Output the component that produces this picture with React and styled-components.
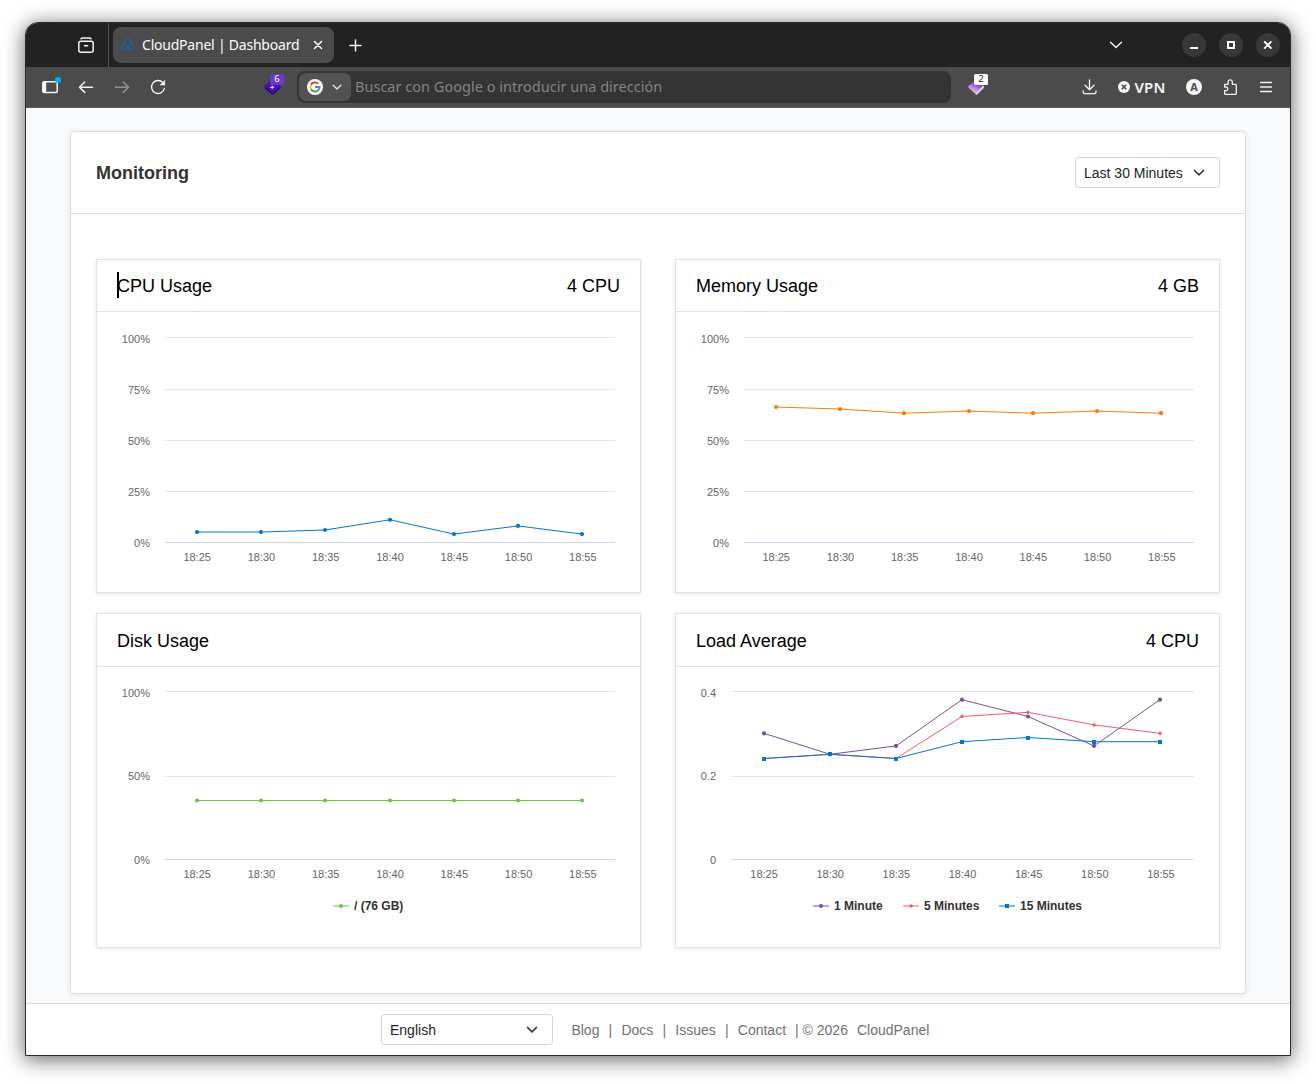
import styled, { createGlobalStyle } from 'styled-components';

const GlobalStyle = createGlobalStyle`
    * {
        box-sizing: border-box;
    }

    body {
        margin: 0;
        background: white;
        font-family: "Liberation Sans", Arial, sans-serif;
    }
`

const Desktop = styled.div`
    height: 1084px;
    padding: 22px 25px 28px;
    overflow: hidden;
`

const Window = styled.div`
    display: flex;
    flex-direction: column;
    width: 1266px;
    height: 1034px;
    border: 1px solid #2b2b2b;
    border-radius: 13px 13px 0 0;
    overflow: hidden;
    background: #f9fafc;
    box-shadow: 0 3px 20px 1px rgba(0, 0, 0, 0.58);
`

const TabStrip = styled.div`
    display: flex;
    align-items: center;
    height: 44px;
    flex-shrink: 0;
    padding: 0 10px 0 42px;
    background: #222222;
    color: #fbfbfe;
    font-family: "Noto Sans", "Open Sans", sans-serif;
`

const Slot = styled.div`
    display: flex;
    align-items: center;
    justify-content: center;
    flex-shrink: 0;
    position: relative;
    width: ${props => props.$width || 36}px;
    height: 36px;
    margin-left: ${props => props.$left || '0'};
    color: ${props => props.$dim ? '#929292' : '#f4f4f6'};

    svg {
        display: block;
    }
`

const Divider = styled.div`
    width: 1px;
    height: 44px;
    margin: 0 4px;
    background: #555555;
`

const Tab = styled.div`
    display: flex;
    align-items: center;
    width: 221px;
    height: 36px;
    padding: 0 8px;
    border-radius: 8px;
    background: #4b4b4b;
    font-size: 14px;

    span {
        width: 162px;
        margin: 0 7px 1px 7px;
        white-space: nowrap;
        letter-spacing: -0.22px;
    }
`

const WindowButton = styled.div`
    display: flex;
    align-items: center;
    justify-content: center;
    width: 24px;
    height: 24px;
    margin-left: ${props => props.$left || 13}px;
    border-radius: 50%;
    background: #383838;
`

const Toolbar = styled.div`
    display: flex;
    align-items: center;
    height: 41px;
    flex-shrink: 0;
    padding: 0 6px;
    border-bottom: 1px solid #5a5a5a;
    background: #4b4b4b;
    font-family: "Noto Sans", "Open Sans", sans-serif;
`

const UrlBar = styled.div`
    display: flex;
    align-items: center;
    width: 654px;
    height: 32px;
    margin-left: 6px;
    padding: 2px;
    border-radius: 8px;
    background: #343434;
    color: #838383;
    font-size: 14.5px;
    white-space: nowrap;
    letter-spacing: 0.02px;

    > span {
        padding-bottom: 2px;
    }
`

const Engine = styled.div`
    display: flex;
    align-items: center;
    gap: 9px;
    width: 52px;
    height: 28px;
    margin-right: 4px;
    padding-left: 8px;
    border-radius: 7px;
    background: #525252;
    color: #e8e8e8;
`

const Badge = styled.div`
    position: absolute;
    top: 5px;
    right: ${props => props.$right}px;
    width: 14px;
    height: 11px;
    border-radius: 1.5px;
    background: ${props => props.$bg};
    color: ${props => props.$color};
    font-size: 9.5px;
    line-height: 10px;
    text-align: center;
`

const VpnLabel = styled.span`
    margin-left: 4px;
    padding-bottom: 1px;
    font-size: 15px;
    font-weight: 600;
    letter-spacing: 0.2px;
`

const Content = styled.main`
    flex: 1;
    padding: 23px 44px 0;
`

const Panel = styled.section`
    width: 1176px;
    height: 863px;
    border: 1px solid #dedede;
    border-radius: 4px;
    background: white;
    box-shadow: 0 1px 6px rgba(0, 0, 0, 0.08);
`

const PanelHeader = styled.header`
    display: flex;
    align-items: center;
    justify-content: space-between;
    height: 82px;
    padding: 0 25px;
    border-bottom: 1px solid #dedede;

    h2 {
        margin: 2px 0 0;
        color: #333333;
        font-size: 18px;
    }
`

const SelectBox = styled.div`
    display: flex;
    align-items: center;
    justify-content: space-between;
    width: ${props => props.$width}px;
    height: 31px;
    padding: 0 ${props => props.$end}px 0 8px;
    border: 1px solid #ced4da;
    border-radius: 3.5px;
    background: white;
    color: #212529;
    font-size: 14px;
`

const CardGrid = styled.div`
    display: grid;
    grid-template-columns: 545px 545px;
    grid-template-rows: 334px 335px;
    gap: 20px 34px;
    padding: 45px 25px 0;
`

const Card = styled.article`
    border: 1px solid #e2e2e2;
    background: white;
    box-shadow: 0 1px 4px rgba(0, 0, 0, 0.1);

    svg {
        display: block;
    }
`

const CardHeader = styled.div`
    display: flex;
    align-items: center;
    justify-content: space-between;
    position: relative;
    height: ${props => props.$height}px;
    padding: ${props => props.$height - 51}px 20px 0;
    border-bottom: 1px solid #e2e2e2;
    color: black;
    font-size: 18px;
`

const Caret = styled.div`
    position: absolute;
    left: 20px;
    top: 12px;
    width: 2px;
    height: 26px;
    background: black;
`

const Footer = styled.footer`
    display: flex;
    align-items: center;
    height: 52px;
    flex-shrink: 0;
    padding-left: 355px;
    border-top: 1px solid #dcdfe2;
    background: white;
    color: #6f7275;
    font-size: 14px;
`

const FooterLinks = styled.div`
    display: flex;
    margin-left: 18.4px;
    white-space: pre;

    i {
        width: 22px;
        font-style: normal;
        text-align: center;
    }
`

const Copyright = styled.span`
    margin: 0 9px 0 9px;
`

const times = ['18:25', '18:30', '18:35', '18:40', '18:45', '18:50', '18:55']
// label, grid line y, label baseline
const percentTicks = [['100%', 25, 31], ['75%', 77, 82], ['50%', 128, 133], ['25%', 179, 184], ['0%', 230, 235]]

const charts = [
    {
        title: 'CPU Usage', info: '4 CPU', header: 52, caret: true, left: 68, max: 100, ticks: percentTicks,
        series: [{ color: '#0078d4', shape: 'circle', data: [5, 5, 6, 11, 4, 8, 4] }],
    },
    {
        title: 'Memory Usage', info: '4 GB', header: 52, left: 68, max: 100, ticks: percentTicks,
        series: [{ color: '#fb7a09', shape: 'circle', data: [66, 65, 63, 64, 63, 64, 63] }],
    },
    {
        title: 'Disk Usage', header: 53, left: 68, max: 100,
        ticks: [['100%', 24, 30], ['50%', 109, 113], ['0%', 192, 197]],
        series: [{ name: '/ (76 GB)', legendX: 236, color: '#74c04a', shape: 'circle', data: [35, 35, 35, 35, 35, 35, 35] }],
    },
    {
        title: 'Load Average', info: '4 CPU', header: 53, left: 55, max: 0.4,
        ticks: [['0.4', 24, 30], ['0.2', 109, 113], ['0', 192, 197]],
        series: [
            { name: '1 Minute', legendX: 137, color: '#774fa8', shape: 'circle', data: [0.3, 0.25, 0.27, 0.38, 0.34, 0.27, 0.38] },
            { name: '5 Minutes', legendX: 227, color: '#f05b72', shape: 'diamond', data: [0.24, 0.25, 0.24, 0.34, 0.35, 0.32, 0.3] },
            { name: '15 Minutes', legendX: 323, color: '#0078d4', shape: 'square', data: [0.24, 0.25, 0.24, 0.28, 0.29, 0.28, 0.28] },
        ],
    },
]

function Marker({ shape, x, y, color }) {
    if (shape === 'square') return <rect x={x - 2} y={Math.round(y) - 2} width="4" height="4" fill={color} />
    if (shape === 'diamond') return <path d={`M${x} ${y - 2.1}l2.1 2.1l-2.1 2.1l-2.1 -2.1z`} fill={color} />
    return <circle cx={x} cy={y} r="2.1" fill={color} />
}

function LineChart({ left, max, ticks, series }) {
    const right = 518
    const step = (right - left) / times.length
    const top = ticks[0][1] + 0.5
    const bottom = ticks[ticks.length - 1][1] + 0.5
    const px = (i) => left + step * (i + 0.5)
    const pointX = (i) => Math.floor(px(i))
    const py = (v) => bottom - 0.2 - (v / max) * (bottom - top)

    return (
        <svg width="543" height="276" fontSize="11" fill="#666666">
            {ticks.map(([label, y, baseline], i) => (
                <g key={label}>
                    <path d={`M${left} ${y + 0.5}H${right}`} stroke={i === ticks.length - 1 ? '#ccd6eb' : '#e6e6e6'} />
                    <text x={left - 15} y={baseline} textAnchor="end">{label}</text>
                </g>
            ))}
            {times.map((time, i) => (
                <text key={time} x={px(i)} y={bottom + 18.5} textAnchor="middle">{time}</text>
            ))}
            {series.map((s) => (
                <g key={s.color}>
                    <polyline points={s.data.map((v, i) => `${pointX(i)},${py(v)}`).join(' ')} fill="none" stroke={s.color} />
                    {s.data.map((v, i) => <Marker key={i} shape={s.shape} x={pointX(i)} y={py(v)} color={s.color} />)}
                </g>
            ))}
            {series.filter((s) => s.name).map((s) => (
                <g key={s.name}>
                    <path d={`M${s.legendX} 239h16`} stroke={s.color} />
                    <Marker shape={s.shape} x={s.legendX + 8} y={239} color={s.color} />
                    <text x={s.legendX + 21} y="243" fontSize="12" fontWeight="bold" fill="#333333">{s.name}</text>
                </g>
            ))}
        </svg>
    )
}

function Icon({ size = 24, weight = 1.5, children }) {
    return (
        <svg width={size} height={size} viewBox={`0 0 ${size} ${size}`} fill="none" stroke="currentColor"
            strokeWidth={weight} strokeLinecap="round" strokeLinejoin="round">
            {children}
        </svg>
    )
}

function Chevron({ color }) {
    return (
        <svg width="12" height="12" viewBox="0 0 16 16" fill="none" stroke={color} strokeWidth="2" strokeLinecap="round" strokeLinejoin="round">
            <path d="M2 4.5l6 6 6-6" />
        </svg>
    )
}

function CloudLogo() {
    return (
        <svg width="14" height="14" viewBox="0 0 14 14" fill="none" stroke="#1764b4" strokeWidth="1.3" strokeLinecap="round">
            <path d="M3.9 5.6A3.2 3.2 0 1 1 9.6 5.6L7.6 8.2" />
            <path d="M3.9 5.6A3.1 3.1 0 1 0 6.4 10.6L4.9 8" />
            <path d="M9.9 5.5A3.1 3.1 0 1 1 7.6 10.8L6.4 8.6" />
        </svg>
    )
}

function GoogleLogo() {
    return (
        <svg width="16" height="16" viewBox="0 0 16 16" fill="none" strokeWidth="2">
            <circle cx="8" cy="8" r="8" fill="white" />
            <path d="M11.2 4.8A4.6 4.6 0 0 0 4 5.7" stroke="#ea4335" />
            <path d="M4 5.7a4.6 4.6 0 0 0 0 4.6" stroke="#fbbc05" />
            <path d="M4 10.3a4.6 4.6 0 0 0 7 1.1" stroke="#34a853" />
            <path d="M11 11.4A4.6 4.6 0 0 0 12.6 8H8" stroke="#4285f4" />
        </svg>
    )
}

function BrowserTabs() {
    return (
        <TabStrip>
            <Slot>
                <Icon>
                    <path d="M7 5.8q.5-.9 1.6-.9h6.8q1.1 0 1.6.9" />
                    <rect x="4.8" y="8.3" width="14.4" height="11" rx="2" />
                    <path d="M10.5 12.8h3" />
                </Icon>
            </Slot>
            <Divider />
            <Tab>
                <CloudLogo />
                <span>CloudPanel | Dashboard</span>
                <Icon size={14} weight={1.6}><path d="M3.5 3.5l7 7M10.5 3.5l-7 7" /></Icon>
            </Tab>
            <Slot $left="4px">
                <Icon><path d="M11.5 7v11M6 12.5h11" /></Icon>
            </Slot>
            <Slot $left="auto">
                <Icon weight={1.4}><path d="M6.5 9.2l5.5 5.3 5.5-5.3" /></Icon>
            </Slot>
            <WindowButton $left={48}>
                <svg width="24" height="24" fill="white"><path d="M8 14h8v2H8z" /></svg>
            </WindowButton>
            <WindowButton>
                <svg width="24" height="24" fill="none" stroke="white" strokeWidth="2"><path d="M9 9h6v6H9z" /></svg>
            </WindowButton>
            <WindowButton>
                <svg width="24" height="24" fill="none" stroke="white" strokeWidth="2"><path d="M8.2 8.4l7.2 7.2M15.4 8.4l-7.2 7.2" /></svg>
            </WindowButton>
        </TabStrip>
    )
}

function BrowserToolbar() {
    return (
        <Toolbar>
            <Slot>
                <Icon>
                    <rect x="4.8" y="6.8" width="14.4" height="10.6" rx="1.2" />
                    <path d="M4.6 7h3.6v10H4.6z" fill="currentColor" stroke="none" />
                    <circle cx="20" cy="5" r="3" fill="#00aef5" stroke="none" />
                </Icon>
            </Slot>
            <Slot>
                <Icon><path d="M18.5 12.2h-13M10.7 7l-5.2 5.2 5.2 5.2" /></Icon>
            </Slot>
            <Slot $dim>
                <Icon><path d="M5.5 12.2h13M13.3 7l5.2 5.2-5.2 5.2" /></Icon>
            </Slot>
            <Slot>
                <Icon weight={1.4}>
                    <path d="M18.4 13.4A6.5 6.5 0 1 1 16.9 7.6" />
                    <path d="M18.8 5.6v4.4h-4.4z" fill="currentColor" strokeWidth="0.6" />
                </Icon>
            </Slot>
            <Slot $left="79px">
                <svg width="24" height="24">
                    <path d="M11.5 4l8 7.5v1.8l-8 6.7-8-6.7v-1.8z" fill="#2a0577" />
                    <path d="M11.5 4l8 7.5-8 6.8-8-6.8z" fill="#4c0bb8" />
                    <path d="M8.3 12.7l2-.9.9-1.5.8 1.3 2 .5-2 .8-.8 1.4-.9-1.2z" fill="#e9d9ff" />
                </svg>
                <Badge $right={7} $bg="#6c38c4" $color="white">6</Badge>
            </Slot>
            <UrlBar>
                <Engine>
                    <GoogleLogo />
                    <Icon size={10} weight={1.3}><path d="M1.2 3.2L5 7l3.8-3.8" /></Icon>
                </Engine>
                <span>Buscar con Google o introducir una dirección</span>
            </UrlBar>
            <Slot $left="8px">
                <svg width="24" height="24">
                    <defs>
                        <linearGradient id="gem" x1="0.7" y1="0.1" x2="0.25" y2="0.95">
                            <stop offset="0.3" stopColor="#6a42ee" />
                            <stop offset="0.65" stopColor="#bd8ede" />
                            <stop offset="1" stopColor="#ffc2a0" />
                        </linearGradient>
                    </defs>
                    <path d="M12.5 8l6.3 3q1 1-.2 2.2l-6 6q-1.2 1.2-2.4 0z" fill="#dcc9ed" />
                    <path d="M10.5 4.4q.8-.6 1.6 0l5.2 5.4q.5.7-.2 1.5l-6.2 6.6q-.8.7-1.6 0l-5.8-5.4q-.8-.8 0-1.6z" fill="url(#gem)" />
                </svg>
                <Badge $right={7} $bg="white" $color="#222222">2</Badge>
            </Slot>
            <Slot $left="auto">
                <Icon weight={1.3}>
                    <path d="M11.5 4.8v10M7 10.3l4.5 4.5 4.5-4.5M5.2 15.8v1.2q0 1.6 1.6 1.6h9.6q1.6 0 1.6-1.6v-1.2" />
                </Icon>
            </Slot>
            <Slot $width={68}>
                <svg width="12" height="12" fill="none" stroke="#4b4b4b" strokeWidth="1.6">
                    <circle cx="6" cy="6" r="6" fill="#f4f4f6" stroke="none" />
                    <path d="M3.8 3.8l4.4 4.4M8.2 3.8L3.8 8.2" />
                </svg>
                <VpnLabel>VPN</VpnLabel>
            </Slot>
            <Slot>
                <svg width="16" height="16">
                    <circle cx="8" cy="8" r="8" fill="#f7f7f9" />
                    <text x="8" y="12" textAnchor="middle" fontSize="11" fontWeight="bold" fill="#4b4b4b">A</text>
                </svg>
            </Slot>
            <Slot>
                <Icon weight={1.3}>
                    <path d="M6.7 9.3h3.4V6.9a2.1 2.1 0 0 1 4.2 0v2.4h3a1 1 0 0 1 1 1v8.1a1 1 0 0 1-1 1H7.5a.9.9 0 0 1-.9-.9v-2.9h2a1.9 1.9 0 0 0 0-3.6H6.6z" />
                </Icon>
            </Slot>
            <Slot>
                <Icon weight={1.3}><path d="M6.6 7.5h10.8M6.6 12h10.8M6.6 16.5h10.8" /></Icon>
            </Slot>
        </Toolbar>
    )
}

export default function App() {
    return (
        <Desktop>
            <GlobalStyle />
            <Window>
                <BrowserTabs />
                <BrowserToolbar />
                <Content>
                    <Panel>
                        <PanelHeader>
                            <h2>Monitoring</h2>
                            <SelectBox $width={145} $end={14}>
                                Last 30 Minutes
                                <Chevron color="#343a40" />
                            </SelectBox>
                        </PanelHeader>
                        <CardGrid>
                            {charts.map((chart) => (
                                <Card key={chart.title}>
                                    <CardHeader $height={chart.header}>
                                        {chart.caret && <Caret />}
                                        <span>{chart.title}</span>
                                        <span>{chart.info}</span>
                                    </CardHeader>
                                    <LineChart {...chart} />
                                </Card>
                            ))}
                        </CardGrid>
                    </Panel>
                </Content>
                <Footer>
                    <SelectBox $width={172} $end={14}>
                        English
                        <Chevron color="#343a40" />
                    </SelectBox>
                    <FooterLinks>
                        <span>Blog</span><i>|</i>
                        <span>Docs</span><i>|</i>
                        <span>Issues</span><i>|</i>
                        <span>Contact</span>
                        <Copyright>| © 2026</Copyright>
                        <span>CloudPanel</span>
                    </FooterLinks>
                </Footer>
            </Window>
        </Desktop>
    )
}
